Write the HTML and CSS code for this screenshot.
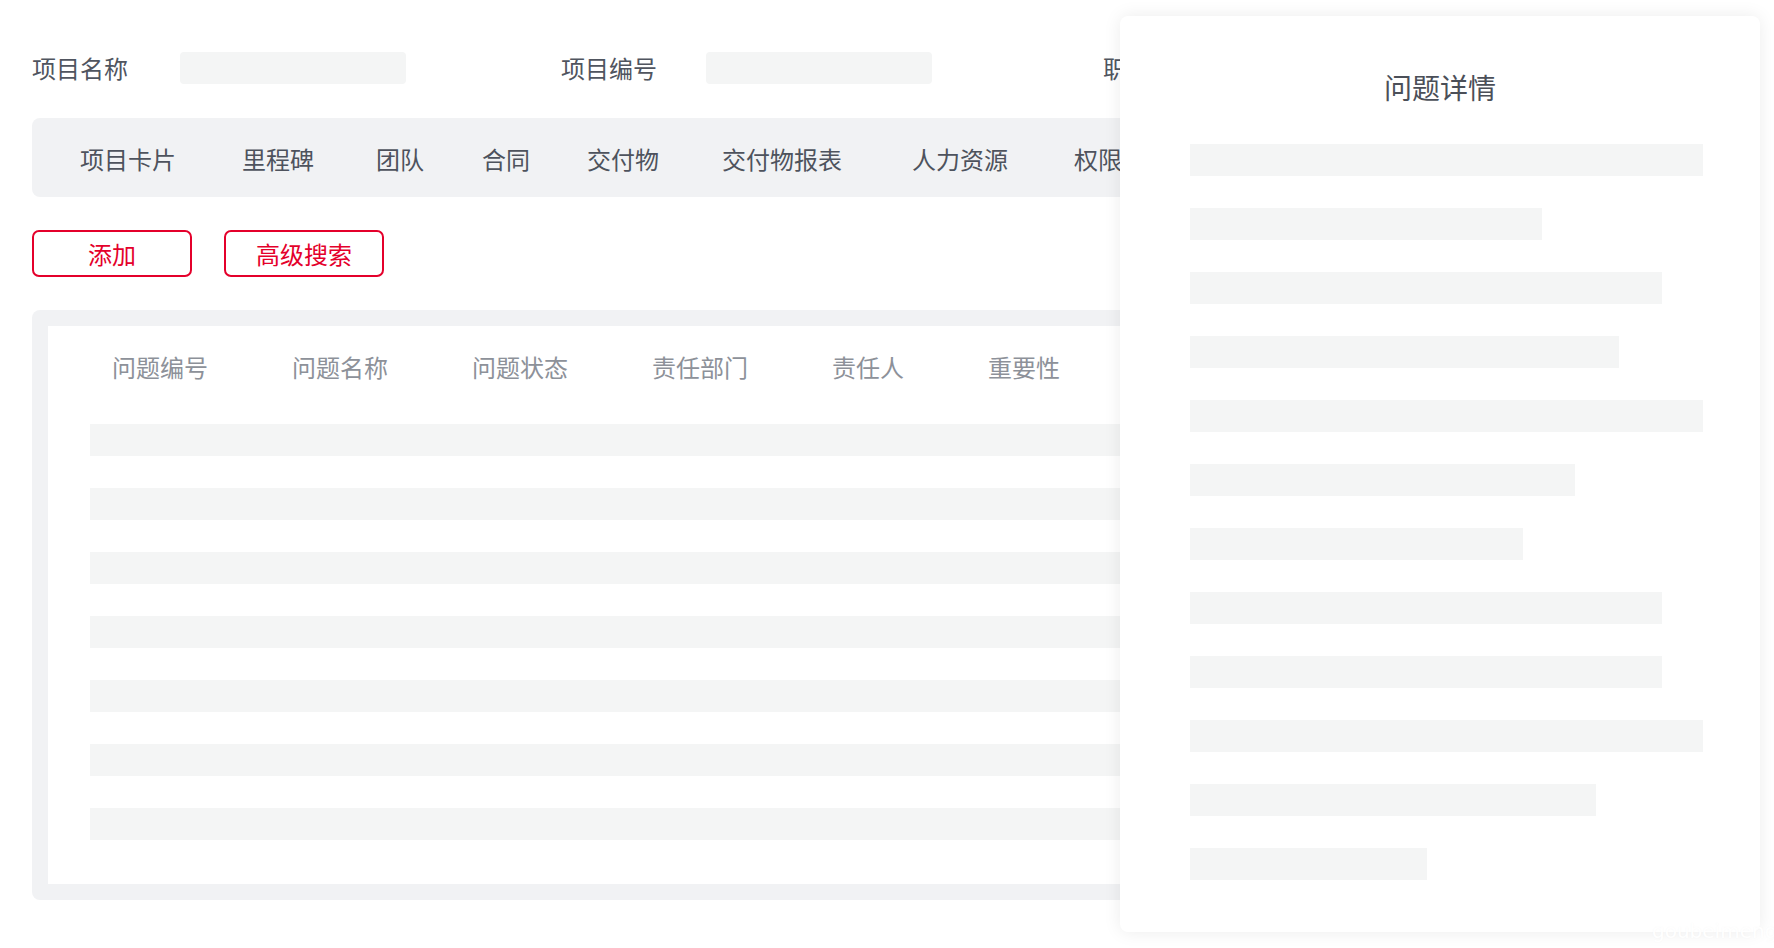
FILE: index.html
```html
<!DOCTYPE html>
<html lang="zh-CN">
<head>
<meta charset="utf-8">
<title>问题详情</title>
<link rel="stylesheet" href="styles.css">
</head>
<body>
<div class="page">
  <div class="filters">
    <div class="field"><span class="label">项目名称</span><span class="input"></span></div>
    <div class="field"><span class="label">项目编号</span><span class="input"></span></div>
    <div class="field"><span class="label">职责</span><span class="input"></span></div>
  </div>

  <nav class="tabs">
    <span class="tab">项目卡片</span>
    <span class="tab">里程碑</span>
    <span class="tab">团队</span>
    <span class="tab">合同</span>
    <span class="tab">交付物</span>
    <span class="tab">交付物报表</span>
    <span class="tab">人力资源</span>
    <span class="tab">权限</span>
  </nav>

  <div class="actions">
    <button class="btn">添加</button>
    <button class="btn">高级搜索</button>
  </div>

  <section class="table-wrap">
    <div class="table">
      <div class="thead">
        <span class="th">问题编号</span>
        <span class="th">问题名称</span>
        <span class="th">问题状态</span>
        <span class="th">责任部门</span>
        <span class="th">责任人</span>
        <span class="th">重要性</span>
      </div>
      <div class="rows">
        <div class="row-skel"></div>
        <div class="row-skel"></div>
        <div class="row-skel"></div>
        <div class="row-skel"></div>
        <div class="row-skel"></div>
        <div class="row-skel"></div>
        <div class="row-skel"></div>
      </div>
    </div>
  </section>
</div>

<aside class="drawer">
  <h2 class="drawer-title">问题详情</h2>
  <div class="drawer-body">
    <div class="bar" style="width:513px"></div>
    <div class="bar" style="width:352px"></div>
    <div class="bar" style="width:472px"></div>
    <div class="bar" style="width:429px"></div>
    <div class="bar" style="width:513px"></div>
    <div class="bar" style="width:385px"></div>
    <div class="bar" style="width:333px"></div>
    <div class="bar" style="width:472px"></div>
    <div class="bar" style="width:472px"></div>
    <div class="bar" style="width:513px"></div>
    <div class="bar" style="width:406px"></div>
    <div class="bar" style="width:237px"></div>
  </div>
</aside>

<div class="watermark">goubeimeng</div>
</body>
</html>
```

FILE: styles.css
```css
* { box-sizing: border-box; }

html, body {
  margin: 0;
  padding: 0;
  background: #ffffff;
  width: 1774px;
  height: 948px;
  overflow: hidden;
  font-family: "Noto Sans CJK SC", "Noto Sans", "Liberation Sans", sans-serif;
}

.page {
  padding: 52px 32px 0 32px;
}

/* filter row */
.filters {
  display: grid;
  grid-template-columns: 529px 542px 1fr;
  height: 32px;
}
.field {
  display: flex;
  align-items: center;
}
.label {
  width: 148px;
  flex: none;
  font-size: 24px;
  line-height: 32px;
  color: #50555f;
  white-space: nowrap;
}
.field:nth-child(2) .label { width: 145px; }
.input {
  display: block;
  width: 226px;
  height: 32px;
  border-radius: 4px;
  background: #f4f5f5;
}

/* tabs */
.tabs {
  margin-top: 34px;
  height: 79px;
  background: #f1f2f4;
  border-radius: 8px;
  padding-left: 48px;
  display: grid;
  grid-template-columns: 162px 134px 106px 105px 135px 190px 162px auto;
  align-items: center;
}
.tab {
  font-size: 24px;
  line-height: 32px;
  color: #4e535d;
  white-space: nowrap;
  padding-top: 3px;
}

/* buttons */
.actions {
  margin-top: 33px;
  display: flex;
  gap: 32px;
}
.btn {
  width: 160px;
  height: 47px;
  border: 2px solid #e4002b;
  border-radius: 7px;
  background: #ffffff;
  color: #e4002b;
  font-family: inherit;
  font-size: 24px;
  line-height: 1;
  padding: 0;
  display: flex;
  align-items: center;
  justify-content: center;
}

/* table */
.table-wrap {
  margin-top: 33px;
  background: #f1f2f4;
  border-radius: 8px;
  padding: 16px;
  height: 590px;
}
.table {
  background: #ffffff;
  height: 100%;
  padding: 25px 0 0 42px;
}
.thead {
  display: flex;
  gap: 84px;
  padding-left: 22px;
  height: 32px;
  align-items: center;
}
.th {
  font-size: 24px;
  line-height: 32px;
  color: #8d9199;
  white-space: nowrap;
}
.rows {
  margin-top: 41px;
  display: flex;
  flex-direction: column;
  gap: 32px;
}
.row-skel {
  height: 32px;
  background: #f4f5f5;
}

/* drawer overlay */
.drawer {
  position: absolute;
  left: 1120px;
  top: 16px;
  width: 640px;
  height: 916px;
  background: #ffffff;
  border-radius: 8px;
  box-shadow: 0 0 18px rgba(0, 0, 0, 0.08);
  padding: 51px 58px 0 70px;
}
.drawer-title {
  margin: 0;
  text-align: center;
  font-size: 28px;
  font-weight: 400;
  line-height: 40px;
  color: #4b4f58;
  margin-left: -12px;
}
.drawer-body {
  margin-top: 37px;
  display: flex;
  flex-direction: column;
  gap: 32px;
}
.bar {
  height: 32px;
  background: #f4f5f5;
}

.watermark {
  position: absolute;
  left: 1652px;
  top: 918px;
  font-family: "DejaVu Sans", sans-serif;
  font-size: 20px;
  line-height: 26px;
  color: #ffffff;
  text-shadow: 0 0 2px rgba(0, 0, 0, 0.03);
  white-space: nowrap;
}
```
